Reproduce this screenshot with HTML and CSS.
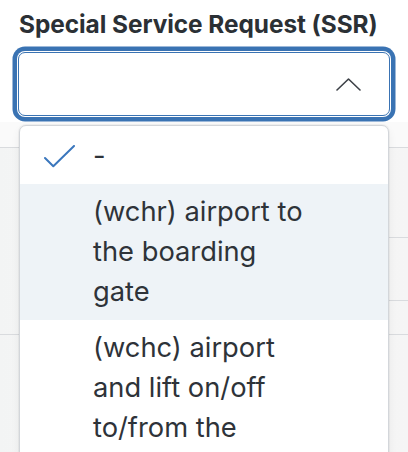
FILE: index.html
```html
<!DOCTYPE html>
<html lang="en">
<head>
<meta charset="utf-8">
<title>SSR select</title>
<link rel="stylesheet" href="styles.css">
</head>
<body>
<div class="page">
  <div class="field">
    <div class="label">Special Service Request (SSR)</div>
    <div class="select-wrap">
      <div class="select">
        <svg class="chevron" width="25" height="13" viewBox="0 0 25 13" aria-hidden="true">
          <path d="M1 12 L12.5 1 L24 12" fill="none" stroke="#3d4147" stroke-width="1.6" stroke-linecap="round" stroke-linejoin="round"/>
        </svg>
      </div>
      <ul class="menu">
        <li class="item">
          <svg class="check" width="32" height="24" viewBox="0 0 32 24" aria-hidden="true">
            <path d="M1 13 L9.3 21.3 L30 1" fill="none" stroke="#3b77bd" stroke-width="2" stroke-linecap="round" stroke-linejoin="round"/>
          </svg>
          <span class="item-text">-</span>
        </li>
        <li class="item item-active"><span class="item-text">(wchr) airport to the boarding gate</span></li>
        <li class="item"><span class="item-text">(wchc) airport and lift on/off to/from the aircraft seat</span></li>
      </ul>
    </div>
  </div>
  <div class="backdrop">
    <div class="bd-head"></div>
    <div class="bd-grid">
      <div class="bd-col">
        <div class="bd-cell h187"></div>
        <div class="bd-cell last"></div>
      </div>
      <div class="bd-col">
        <div class="bd-cell h90"></div>
        <div class="bd-cell h63"></div>
        <div class="bd-cell h34"></div>
        <div class="bd-cell last"></div>
      </div>
    </div>
  </div>
</div>
</body>
</html>
```

FILE: styles.css
```css
* { box-sizing: border-box; }
html, body { margin: 0; padding: 0; }
body {
  background: #ffffff;
  font-family: Inter, "Noto Sans", "Liberation Sans", sans-serif;
  color: #2d3238;
  overflow: hidden;
  width: 408px;
  height: 452px;
}
.page { position: relative; }
.field {
  padding: 10px 18px 0 18px;
  position: relative;
  z-index: 2;
}
.label {
  font-size: 24.4px;
  font-weight: 700;
  line-height: 29px;
  color: #2b3035;
  padding-left: 1px;
  white-space: nowrap;
  letter-spacing: -0.05px;
}
.select-wrap {
  position: relative;
  margin-top: 13px;
}
.select {
  height: 64px;
  border: 1.5px solid #3a73b3;
  border-radius: 7px;
  background: #ffffff;
  box-shadow: 0 0 0 1px #ffffff, 0 0 0 5.5px #3a73b3;
  display: flex;
  align-items: center;
  justify-content: flex-end;
  padding-right: 28px;
}
.chevron { display: block; }
.menu {
  position: absolute;
  left: 1px;
  right: 1px;
  top: calc(100% + 9px);
  margin: 0;
  padding: 2px 0 0 0;
  list-style: none;
  background: #ffffff;
  border: 1px solid #d3d6da;
  border-radius: 7px;
  box-shadow: 0 0 0 1px rgba(0,0,0,0.04), 0 4px 10px rgba(0,0,0,0.06);
  overflow: hidden;
  height: 340px;
}
.item {
  position: relative;
  padding: 8px 16px 8px 73px;
  font-size: 27.3px;
  line-height: 40px;
  color: #2e3339;
}
.item-active { background: #eef3f7; }
.item-text { display: block; max-width: 224px; }
.check {
  position: absolute;
  left: 24px;
  top: 17px;
}
.backdrop {
  position: relative;
  z-index: 1;
  margin-top: 6px;
  background: linear-gradient(90deg, #f3f4f4, #f8f8f8 40%, #f5f5f5);
}
.bd-head {
  height: 26px;
  border-bottom: 1.5px solid #d9dbde;
  background: #fafafa;
}
.bd-grid {
  display: grid;
  grid-template-columns: 1fr 1fr;
}
.bd-cell { border-bottom: 1.5px solid #d9dbde; }
.bd-cell.last { border-bottom: none; height: 140px; }
.h187 { height: 187px; }
.h90 { height: 90px; }
.h63 { height: 63px; }
.h34 { height: 34px; }
```
